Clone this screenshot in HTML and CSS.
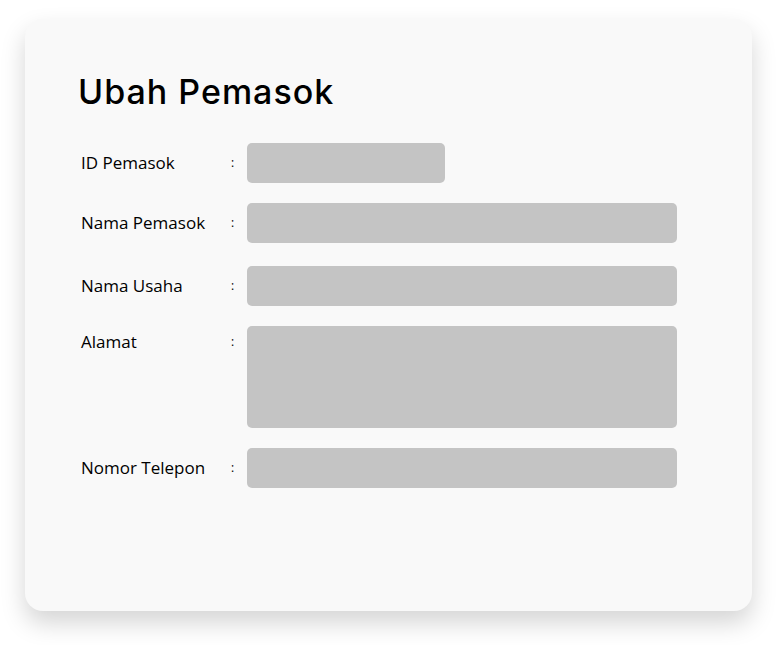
FILE: index.html
```html
<!DOCTYPE html>
<html lang="id">
<head>
<meta charset="utf-8">
<link rel="stylesheet" href="styles.css">
</head>
<body>
<div class="card">
  <h1 class="title">Ubah Pemasok</h1>
  <div class="form">
    <div class="row">
      <span class="label">ID Pemasok</span><span class="colon">:</span>
      <div class="field field-short"></div>
    </div>
    <div class="row">
      <span class="label">Nama Pemasok</span><span class="colon">:</span>
      <div class="field"></div>
    </div>
    <div class="row row-gap">
      <span class="label">Nama Usaha</span><span class="colon">:</span>
      <div class="field"></div>
    </div>
    <div class="row">
      <span class="label label-top">Alamat</span><span class="colon label-top">:</span>
      <div class="field field-tall"></div>
    </div>
    <div class="row">
      <span class="label">Nomor Telepon</span><span class="colon">:</span>
      <div class="field"></div>
    </div>
  </div>
</div>
</body>
</html>
```

FILE: styles.css
```css
html, body {
  margin: 0;
  padding: 0;
  background: #ffffff;
}
body {
  padding: 19px 0 34px 25px;
  font-family: "Open Sans", "Lato", sans-serif;
  color: #000;
}
.card {
  box-sizing: border-box;
  width: 727px;
  height: 592px;
  background: #f9f9f9;
  border-radius: 18px;
  box-shadow: 0 12px 24px rgba(0, 0, 0, 0.17);
  padding: 51px 0 0 53px;
}
.title {
  margin: 0 0 29px 0;
  font-family: "Inter", "Open Sans", sans-serif;
  font-size: 34px;
  font-weight: 500;
  line-height: 44px;
  letter-spacing: 1px;
}
.form {
  display: flex;
  flex-direction: column;
  gap: 20px;
  padding-left: 3px;
}
.row {
  display: flex;
  align-items: center;
}
.row-gap {
  margin-top: 3px;
}
.label {
  width: 150px;
  font-size: 17px;
  line-height: 20px;
}
.colon {
  width: 16px;
  font-size: 12px;
  line-height: 20px;
}
.label-top {
  align-self: flex-start;
  margin-top: 6px;
}
.field {
  width: 430px;
  height: 40px;
  background: #c4c4c4;
  border-radius: 5px;
}
.field-short {
  width: 198px;
}
.field-tall {
  height: 102px;
}
```
